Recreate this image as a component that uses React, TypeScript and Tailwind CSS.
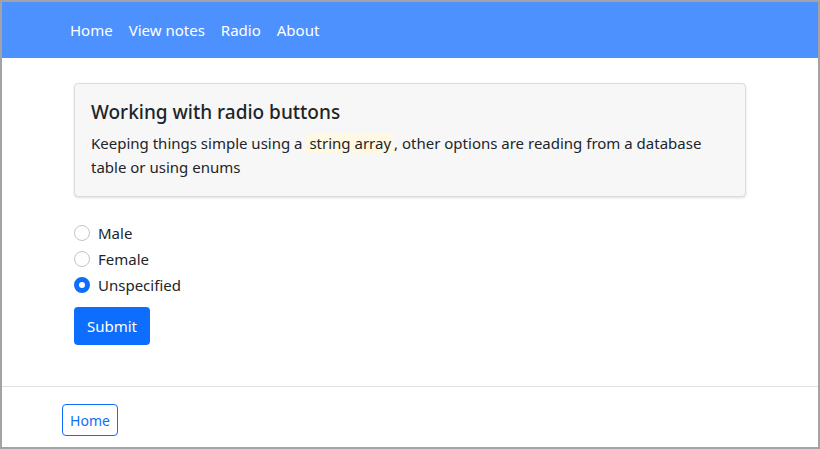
import React, { useState } from "react";

const options = ["Male", "Female", "Unspecified"];

export default function App() {
  const [selected, setSelected] = useState("Unspecified");

  return (
    <div
      className="h-[449px] w-[820px] border-2 border-[#a3a3a3] bg-white flex flex-col text-[#212529]"
      style={{ fontFamily: '"Noto Sans", "Open Sans", sans-serif' }}
    >
      <nav className="h-[56px] bg-[#4d91ff] flex items-center pl-[60px] shrink-0">
        {["Home", "View notes", "Radio", "About"].map((item) => (
          <a key={item} className="px-2 text-[15px] text-white">
            {item}
          </a>
        ))}
      </nav>

      <main className="flex-1 px-[72px] pt-[25px]">
        <div className="w-[672px] rounded border border-[#dcdcdc] bg-[#f7f7f7] shadow-sm px-4 pt-[14px] pb-[17px]">
          <h1 className="text-[19px] font-medium leading-[28px] mb-[5px]">
            Working with radio buttons
          </h1>
          <p className="text-[15px] leading-[24px]">
            Keeping things simple using a{" "}
            <span className="bg-[#fff8e3] px-[3px]">string array</span>, other options are
            reading from a database table or using enums
          </p>
        </div>

        <div className="mt-[23px] flex flex-col">
          {options.map((opt) => (
            <label key={opt} className="flex items-center h-[26px] gap-[8px] text-[15px] cursor-pointer">
              <span
                className={
                  selected === opt
                    ? "w-4 h-4 rounded-full border-[5px] border-[#0d6efd] bg-white"
                    : "w-4 h-4 rounded-full border border-[#c4c4c4] bg-white"
                }
                onClick={() => setSelected(opt)}
              />
              <span>{opt}</span>
            </label>
          ))}
        </div>

        <button className="mt-[9px] h-[38px] w-[76px] rounded bg-[#0d6efd] text-white text-[15px]">
          Submit
        </button>
      </main>

      <footer className="h-[61px] border-t border-[#dbe2e0] pl-[60px] pt-[17px] shrink-0">
        <button className="h-[32px] w-[56px] rounded border border-[#0d6efd] text-[#0d6efd] text-[14px]">
          Home
        </button>
      </footer>
    </div>
  );
}
